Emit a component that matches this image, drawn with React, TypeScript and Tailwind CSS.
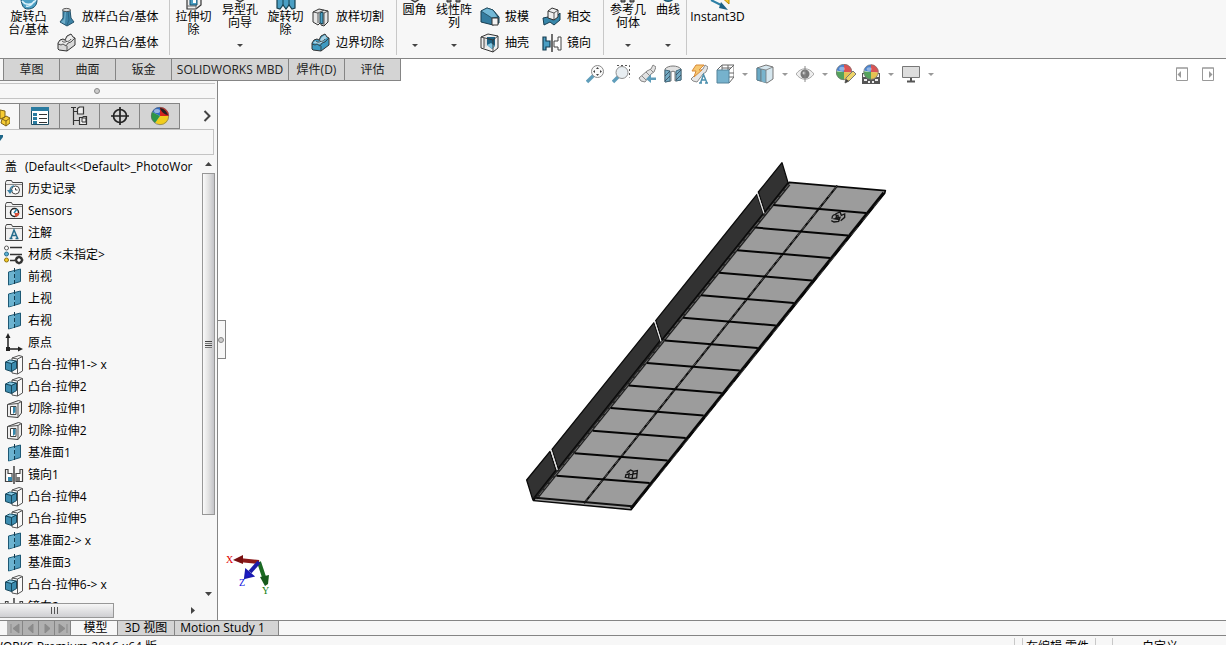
import { ReactNode } from "react";

const blue = "#4b9fc4"
const ink = "#333"

function Svg({ children, w = 20, h = 20, box }: { children: ReactNode; w?: number; h?: number; box?: string }) {
    return <svg className="shrink-0" width={w} height={h} viewBox={box || `0 0 ${w} ${h}`} fill="none" aria-hidden="true">{children}</svg>
}

/* ---------- ribbon icons ---------- */

const Revolve = () => (
    <Svg w={24} h={24}>
        <path d="M4 14c0-6 16-6 16 0s-4 9-9 9-6-4-7-9z" fill={blue} stroke="#17506d" />
        <path d="M5 15c3 4 9 5 14-1M9 20c4 1 6-1 8-5" stroke="#d8f0fa" strokeWidth="1.5" />
    </Svg>
)
const ExtrudeCut = () => (
    <Svg w={24} h={24}>
        <path d="M5 3h9l5-2v18l-5 4H5z" fill="#eee" stroke={ink} strokeWidth="1.2" />
        <path d="M14 3v20M5 20h9" stroke="#666" />
        <path d="M8 8h7v11H8z" fill={blue} stroke="#17506d" />
        <path d="M11 10h3v7h-3z" fill="#fff" />
    </Svg>
)
const HoleWizard = () => (
    <Svg w={24} h={24}>
        <path d="M7 15l10-3v8l-5 3-5-3z" fill="#bbb" stroke={ink} strokeWidth="1.2" />
    </Svg>
)
const RevolveCut = () => (
    <Svg w={24} h={24}>
        <path d="M3 10h6l3 3 3-3h6v12l-3 1-3-4-3 4-3-4-3 4-3-1z" fill={blue} stroke="#17404f" strokeWidth="1.2" />
        <path d="M9 12v8M15 12v8" stroke="#17404f" />
    </Svg>
)
const DarkTip = () => (
    <Svg w={24} h={24}>
        <path d="M5 18h4v5H5zM14 18h4v5h-4z" fill="#777" stroke={ink} />
    </Svg>
)
const BlueTip = () => (
    <Svg w={24} h={24}>
        <path d="M6 17c2 7 10 7 13 0" fill={blue} stroke="#17506d" strokeWidth="1.5" />
    </Svg>
)
const Instant = () => (
    <Svg w={24} h={24}>
        <path d="M13 9h10v9z" fill="#f8c930" stroke="#b88a00" />
        <path d="M5 14l12 6" stroke="#2c7fa5" strokeWidth="2" />
        <path d="M15 16l7 8-9-2z" fill="#1d6285" />
    </Svg>
)
const Loft = () => (
    <Svg>
        <path d="M6 3h7l1 8 3 4-7 4-7-4 3-4z" fill="#3d83a6" stroke="#24526a" />
        <path d="M8 4l-1 8-3 3 4 2 1-13z" fill="#6fadc9" />
        <path d="M11 4l1 9-2 5" stroke="#2b6685" />
        <ellipse cx="9.500" cy="3" rx="4" ry="1.600" fill="#ddd" stroke="#333" strokeWidth=".8" />
    </Svg>
)
const Boundary = ({ fill = "#d9d9d9" }: { fill?: string }) => (
    <Svg>
        <path d="M1 10l2-3 3-1 2 1 2-4 4-2 2 3 2 1v7l-8 6-8-1-1-1z" fill={fill} stroke={ink} />
        <path d="M2 10l2-2 3 1c2 0 2-3 4-5l3-2 2 3c-2 0-3 4-5 5l-3 1z" fill="#fff" opacity=".55" />
        <path d="M1 11l3 1 2-1 3 2 2-3 3-1 4-4M10 13v5M5 8c2 2 4 1 5 0M8 7c1 2 4 2 6-1" stroke={ink} strokeWidth=".8" />
    </Svg>
)
const LoftCut = () => (
    <Svg>
        <path d="M2 5l6-3 9 2v11l-4 4-3-1v-3l-3 3-5-3z" fill="#e6e6e6" stroke={ink} />
        <path d="M9 6l3-1v12l-3-1z" fill={blue} stroke="#17404f" />
        <path d="M2 5l5 1v10M17 4l-4 2v12M7 6l6-3" stroke={ink} strokeWidth=".8" />
    </Svg>
)
const Draft = () => (
    <Svg>
        <path d="M1 4l6-3 6 2 6 7v6l-6 2-12-3z" fill="#347c9f" stroke="#173d50" />
        <path d="M1 4l6-3 6 2 5 7-6 1z" fill="#72b8d6" stroke="#173d50" strokeWidth=".7" />
        <path d="M12 11h6v7h-6z" fill="#f3f3f3" stroke={ink} />
    </Svg>
)
const Shell = () => (
    <Svg>
        <path d="M1 4l7-3 10 2v12l-5 4-12-4z" fill="#eee" stroke={ink} />
        <path d="M4 6l3 1v7l-3-1z" fill="#ddd" />
        <path d="M7 4h8v9l-3 3-5-4z" fill="#1d6284" />
        <path d="M7 12l4-2 4 3-3 3z" fill="#7cc4e0" />
        <path d="M1 4l12 3v12M13 7l5-4M4 5v10" stroke={ink} strokeWidth=".9" />
    </Svg>
)
const Intersect = () => (
    <Svg>
        <path d="M1 11l5-1 5 3 7-7v7l-6 5-4-3-6 3z" fill="#3887aa" stroke="#173d50" />
        <path d="M6 4l4-3 6 2v7l-4 3-6-2z" fill="#eee" stroke={ink} />
        <path d="M6 4l6 2v7M12 6l4-3" stroke={ink} strokeWidth=".8" />
    </Svg>
)
const Mirror = () => (
    <Svg>
        <path d="M1 4h3v4h4v6H4v3H1z" fill={blue} stroke="#173d50" strokeWidth="1.200" />
        <path d="M19 4h-3v4h-4v6h4v3h3z" fill="#fff" stroke="#444" />
        <path d="M10 1v18" stroke="#111" strokeWidth="1.2" />
    </Svg>
)

/* ---------- view toolbar icons ---------- */

const ZoomFit = () => (
    <Svg w={18}>
        <path d="M1 18l7-7" stroke="#5f9dba" strokeWidth="3.4" />
        <circle cx="11.500" cy="7.500" r="6" fill="#fafafa" stroke="#8a8a8a" />
        <path d="M11.500 3l1.500 2h-3zM11.500 12l1.500-2h-3zM7 7.500l2-1.500v3zM16 7.500l-2-1.500v3z" fill="#444" />
    </Svg>
)
const ZoomArea = () => (
    <Svg w={18}>
        <path d="M5 1.500h12.500v12" stroke="#555" strokeDasharray="2 2" />
        <path d="M1 18l6-6" stroke="#5f9dba" strokeWidth="3.400" />
        <circle cx="10" cy="8.500" r="6" fill="#e8eef2" stroke="#909090" />
    </Svg>
)
const PrevView = () => (
    <Svg w={18}>
        <path d="M1 14l8-7 4-2 2-4 3 2-2 5-3 2-6 8-4-1z" fill="#e2e2e2" stroke="#858585" />
        <path d="M4 12l4 4M8 8l4 4M12 5l3 3" stroke="#888" />
        <path d="M18 13.500h-5v-3l-5 4.500 5 4v-3h5z" fill="#5f9dba" />
    </Svg>
)
const Section = () => (
    <Svg w={18}>
        <path d="M1 5c3-4 13-4 16 0v11l-6 1V8c-1-1-3-1-4 0v9l-6 1z" fill="#e1e1e1" stroke="#777" />
        <path d="M1 6l5 1v10l-5 1zM12 7l5-2v11l-5 1z" fill="#74abc4" stroke="#456c80" />
        <path d="M1 12l5-5M1 17l5-5M12 11l5-5M12 16l5-5" stroke="#345" strokeWidth=".8" />
    </Svg>
)
const Annotate = () => (
    <Svg w={18}>
        <path d="M1 15l7-7 5-3 2-4 3 2-2 5-3 2-6 8-4-1z" fill="#e6e6e6" stroke="#8a8a8a" />
        <path d="M6 1h8l-5 5h3l-8 7 2-6H2z" fill="#f7c872" stroke="#d88a39" />
        <path d="M9 19h3M15 19h3M10.500 19l3-8.500 3.500 8.500M12 16h3.500" stroke="#4c90ae" strokeWidth="1.500" />
    </Svg>
)
const Orient = () => (
    <Svg w={18}>
        <path d="M1 6l5-5h12v12l-5 6M6 1v5M18 1l-5 5M12 1v12h6M12 9h6M6 4h9" stroke="#666" />
        <path d="M1 6h12v13H1z" fill="#76b2cd" stroke="#54839a" />
    </Svg>
)
const Display = () => (
    <Svg w={18}>
        <path d="M1 4l9-3 7 2v12l-6 4-10-3z" fill="#d5e6ee" stroke="#777" />
        <path d="M1 4l4 1v12l-4-1z" fill="#69a9c5" stroke="#557f93" strokeWidth=".8" />
        <path d="M5 5l5 1v13l-5-2z" fill="#79b4cd" />
        <path d="M5 5l5 1 7-3M10 6v13M5 5v12" stroke="#777" strokeWidth=".8" />
    </Svg>
)
const Eye = () => (
    <Svg w={18}>
        <path d="M0 10c5-7 13-7 18 0-5 7-13 7-18 0z" fill="#eee" stroke="#aaa" />
        <circle cx="9" cy="10" r="4.500" fill="#777" />
        <circle cx="8" cy="9" r="1.500" fill="#ccc" />
        <path d="M9 2v16" stroke="#888" />
    </Svg>
)
const Ball = ({ x = 9, y = 9, r = 8 }: { x?: number; y?: number; r?: number }) => (
    <g transform={`translate(${x} ${y}) scale(${r})`}>
        <path d="M0 0L-.95-.2A1 1 0 0 1 .1-.98z" fill="#4a83cf" />
        <path d="M0 0L0-1A1 1 0 0 1 1 .1z" fill="#db5454" />
        <path d="M0 0L1 .05A1 1 0 0 1 0 1z" fill="#e5c251" />
        <path d="M0 0L0 1A1 1 0 0 1-1-.1z" fill="#55a35c" />
        <circle r=".97" stroke="#777" strokeWidth=".09" />
        <ellipse cx="-.25" cy="-.4" rx=".35" ry=".25" fill="#fff" opacity=".4" />
    </g>
)
const Appearance = () => (
    <Svg>
        <Ball x={8} y={8} r={8} />
        <path d="M9 19l1-5 7-7 3 3-7 7z" fill="#eed569" stroke="#777" />
        <path d="M9 19l1-4 3 2z" fill="#444" />
    </Svg>
)
const Scene = () => (
    <Svg w={18}>
        <path d="M0 9h18v11H0z" fill="#555" />
        <path d="M1 10h2v3H1zM15 10h2v3h-2zM2 15h3v2H2zM6 17h2v2H6zM10 17h2v2h-2zM13 15h3v2h-3z" fill="#eee" />
        <Ball x={9} y={8} r={7.500} />
    </Svg>
)
const Monitor = () => (
    <Svg w={18}>
        <path d="M.5 2.500h17v11H.5z" fill="#ddd" stroke="#777" />
        <path d="M9 14v3M5 17.500h8" stroke="#555" strokeWidth="2" />
    </Svg>
)

const Down = ({ color = "#444", w = 6 }: { color?: string; w?: number }) => (
    <Svg w={w} h={3} box="0 0 6 3"><path d="M0 0h6L3 3z" fill={color} /></Svg>
)

/* ---------- tree icons ---------- */

const Folder = ({ children }: { children: ReactNode }) => (
    <Svg>
        <path d="M1.500 17.500v-14l1-2h5l1 2h10v14z" fill="#f0f0f0" stroke="#444" />
        <path d="M2 5.500h16" stroke="#888" />
        {children}
    </Svg>
)
const HistoryIcon = () => (
    <Folder>
        <circle cx="11.500" cy="11" r="4" fill="#fff" stroke="#444" />
        <path d="M11.500 9v2h2" stroke="#444" />
        <path d="M3 11l3 4 3-4z" fill="#397fa1" />
        <path d="M6 12c0-3 2-5 4-5" stroke="#397fa1" strokeWidth="1.500" />
    </Folder>
)
const SensorIcon = () => (
    <Folder>
        <circle cx="10.500" cy="11.500" r="4" fill="#fff" stroke="#222" strokeWidth="1.500" />
        <path d="M10 12l3-4" stroke="#2b82a8" strokeWidth="1.500" />
        <path d="M10.500 12h5a5 5 0 0 1-4 4z" fill="#d6503a" />
    </Folder>
)
const NoteIcon = () => (
    <Folder>
        <path d="M5.500 15.500h3M11.500 15.500h3M7 15l3-8 3.500 8M8.500 12.500h3.500" stroke="#256c8c" strokeWidth="1.500" />
    </Folder>
)
const MaterialIcon = () => (
    <Svg>
        <path d="M6 2.500h12M6 9.500h12M6 15.500h5" stroke="#333" strokeWidth="1.500" />
        <circle cx="2.500" cy="3" r="2" fill="#fff" stroke="#555" />
        <circle cx="2.500" cy="9" r="2" fill="#5db1d5" stroke="#2b6d8b" />
        <circle cx="2.500" cy="15" r="2" fill="#f5c927" stroke="#8f7310" />
        <circle cx="15" cy="15" r="3" fill="#fff" stroke="#333" strokeWidth="2" />
        <path d="M15 10.500v9M10.500 15h9M12 12l6 6M18 12l-6 6" stroke="#333" />
        <circle cx="15" cy="15" r="1.500" fill="#fff" />
    </Svg>
)
const PlaneIcon = () => (
    <Svg>
        <path d="M4.500 5l12-3v12.500L4.500 18z" fill="#4f9cbe" stroke="#1d5874" />
        <path d="M5 5.500l6-1.500v12l-6 1.500z" fill="#6cb3d0" />
        <path d="M10.500 1v18" stroke="#143d50" strokeDasharray="4 2" />
    </Svg>
)
const OriginIcon = () => (
    <Svg>
        <path d="M4 4v12h13" stroke="#222" strokeWidth="1.500" />
        <path d="M4 0l2.500 5h-5zM19 16l-5-2.500v5zM2 14h4v4H2z" fill="#222" />
    </Svg>
)
const BossIcon = () => (
    <Svg>
        <path d="M8 3l7-2.500 3.500 1v14.500l-5 3L8 18z" fill="#f8f8f8" stroke="#555" />
        <path d="M13.500 4v15M8 3l5.500 1 5-2.500" stroke="#555" />
        <path d="M1.500 7l4-2 7 1v7.500l-5 3-6-2z" fill="#3c8caf" stroke="#17465b" />
        <path d="M2.500 7l3.500-1.500 5 .8L7.500 8z" fill="#8acbe5" />
        <path d="M1.500 7l6 1.500 5-2.500M7.500 8.500v8" stroke="#17465b" />
    </Svg>
)
const CutIcon = () => (
    <Svg>
        <path d="M3.500 5.500l11-4 3 1V14l-3.500 4.500-10.500-1z" fill="#eee" stroke="#444" />
        <path d="M3.500 5.500l10.500-1v14M14 4.500l3.500-2" stroke="#555" />
        <path d="M6.500 7.500h5.500v8H6.500z" fill="#fff" stroke="#444" />
        <path d="M9 8h2.500v5L9 15z" fill="#3387ac" />
    </Svg>
)
const MirrorFeature = () => (
    <Svg>
        <path d="M1.500 4.500H4v4h4v8H1.500zM18.500 4.500H16v4h-4v8h6.500z" fill="#fff" stroke="#444" strokeWidth="1.200" />
        <path d="M4 12h4v4H4z" fill="#3387ac" />
        <path d="M12 12h4v4h-4z" fill="#777" />
        <path d="M10 1v18" stroke="#111" strokeWidth="1.200" />
    </Svg>
)

/* ---------- ribbon ---------- */

function Big({ icon, lines, arrow, width }: { icon: ReactNode; lines: string[]; arrow?: boolean; width: string }) {
    return (
        <button className={`flex flex-col items-center ${width} ${arrow ? "-mt-[21px]" : "-mt-[14px]"}`}>
            {icon}
            <span className="min-h-[26px] whitespace-pre text-center leading-[13px]">{lines.join("\n")}</span>
            {arrow && <span className="mt-[15px]"><Down /></span>}
        </button>
    )
}

function Stack({ items, width }: { items: [ReactNode, string][]; width: string }) {
    return (
        <div className={`flex flex-col pt-1 ${width}`}>
            {items.map(([icon, label]) => (
                <button key={label} className="flex h-[26px] items-center gap-[5px] whitespace-nowrap">{icon}{label}</button>
            ))}
        </div>
    )
}

function Ribbon() {
    return (
        <header className="flex h-[59px] shrink-0 items-stretch overflow-hidden border-b border-[#858585] bg-[#f7f7f7]">
            <div className="mb-[3px] flex items-start border-r border-[#c8c8c8]">
                <Big width="w-[57px]" icon={<Revolve />} lines={["旋转凸", "台/基体"]} />
                <Stack width="w-28" items={[[<Loft />, "放样凸台/基体"], [<Boundary />, "边界凸台/基体"]]} />
            </div>
            <div className="mb-[3px] flex items-start border-r border-[#c8c8c8]">
                <Big width="w-[47px]" icon={<ExtrudeCut />} lines={["拉伸切", "除"]} />
                <Big width="w-[46px]" icon={<HoleWizard />} lines={["异型孔", "向导"]} arrow />
                <Big width="w-[45px]" icon={<RevolveCut />} lines={["旋转切", "除"]} />
                <Stack width="w-[88px] pl-[3px]" items={[[<LoftCut />, "放样切割"], [<Boundary fill="#3e9ac1" />, "边界切除"]]} />
            </div>
            <div className="mb-[3px] flex items-start border-r border-[#c8c8c8]">
                <Big width="w-[35px]" icon={<HoleWizard />} lines={["圆角"]} arrow />
                <Big width="w-[44px]" icon={<DarkTip />} lines={["线性阵", "列"]} arrow />
                <Stack width="w-[62px] pl-1" items={[[<Draft />, "拔模"], [<Shell />, "抽壳"]]} />
                <Stack width="w-[65px] pl-1" items={[[<Intersect />, "相交"], [<Mirror />, "镜向"]]} />
            </div>
            <div className="mb-[3px] flex items-start border-r border-[#c8c8c8] pr-[2px]">
                <Big width="w-12" icon={<DarkTip />} lines={["参考几", "何体"]} arrow />
                <Big width="w-8" icon={<BlueTip />} lines={["曲线"]} arrow />
            </div>
            <Big width="w-[61px]" icon={<Instant />} lines={["Instant3D"]} />
        </header>
    )
}

const tabs = [
    ["草图", "w-14"], ["曲面", "w-14"], ["钣金", "w-14"], ["SOLIDWORKS MBD", "w-[117px]"], ["焊件(D)", "w-14"], ["评估", "w-14"],
]

const viewTools: [string, ReactNode, boolean][] = [
    ["Zoom to fit", <ZoomFit />, false],
    ["Zoom to area", <ZoomArea />, false],
    ["Previous view", <PrevView />, false],
    ["Section view", <Section />, false],
    ["Annotation views", <Annotate />, false],
    ["View orientation", <Orient />, true],
    ["Display style", <Display />, true],
    ["Hide or show", <Eye />, true],
    ["Edit appearance", <Appearance />, false],
    ["Apply scene", <Scene />, true],
    ["View settings", <Monitor />, true],
]

function TabRow() {
    return (
        <div className="flex h-[22px] shrink-0 items-start">
            <nav className="flex h-[22px] border-b border-[#858585] bg-[#f7f7f7] pl-[3px]">
                <div className="flex border-l border-[#858585]">
                    {tabs.map(([name, w]) => (
                        <button key={name} className={`${w} whitespace-nowrap border-r border-[#858585] bg-[#d4d4d4] text-[#222]`}>{name}</button>
                    ))}
                </div>
            </nav>
            <div className="z-10 flex gap-2 pl-[185px] pt-[5px]">
                {viewTools.map(([name, icon, arrow]) => (
                    <button key={name} aria-label={name} className="flex items-center gap-2">
                        <span className="flex w-[18px]">{icon}</span>
                        {arrow && <Down color="#999" />}
                    </button>
                ))}
            </div>
            <div className="z-10 ml-auto flex gap-[14px] pr-3 pt-2">
                <button aria-label="Collapse left">
                    <Svg w={12} h={14}><path d="M.5 1h11v12.500H.5zM0 1h12" stroke="#999" /><path d="M5 4v7L1.500 7.500z" fill="#999" /></Svg>
                </button>
                <button aria-label="Collapse right">
                    <Svg w={12} h={14}><path d="M.5 1h11v12.500H.5zM0 1h12" stroke="#999" /><path d="M7 4v7l3.500-3.500z" fill="#999" /></Svg>
                </button>
            </div>
        </div>
    )
}

/* ---------- feature manager ---------- */

const tree: [ReactNode, string][] = [
    [<HistoryIcon />, "历史记录"],
    [<SensorIcon />, "Sensors"],
    [<NoteIcon />, "注解"],
    [<MaterialIcon />, "材质 <未指定>"],
    [<PlaneIcon />, "前视"],
    [<PlaneIcon />, "上视"],
    [<PlaneIcon />, "右视"],
    [<OriginIcon />, "原点"],
    [<BossIcon />, "凸台-拉伸1-> x"],
    [<BossIcon />, "凸台-拉伸2"],
    [<CutIcon />, "切除-拉伸1"],
    [<CutIcon />, "切除-拉伸2"],
    [<PlaneIcon />, "基准面1"],
    [<MirrorFeature />, "镜向1"],
    [<BossIcon />, "凸台-拉伸4"],
    [<BossIcon />, "凸台-拉伸5"],
    [<PlaneIcon />, "基准面2-> x"],
    [<PlaneIcon />, "基准面3"],
    [<BossIcon />, "凸台-拉伸6-> x"],
    [<MirrorFeature />, "镜向2"],
]

const panelTabs: [string, ReactNode][] = [
    ["Properties", <Svg>
        <path d="M1.500 1.500h17v17h-17z" fill="#fff" stroke="#1d4d63" /><path d="M1 1h18v4H1z" fill="#2a7ba0" />
        <path d="M3 7h4v3H3zM3 11h4v3H3zM3 15h4v3H3z" fill="#2a7ba0" /><path d="M9 8.500h8M9 12.500h8M9 16.500h8" stroke="#333" />
    </Svg>],
    ["Configurations", <Svg>
        <path d="M3.500 1v18M1 1.500h5M4 5.500h5M4 14.500h5" stroke="#333" strokeWidth="1.200" />
        <path d="M7.500 2.500l2-1.500h4v7h-6zM9.500 11.500h3l1-1h3v8h-7z" fill="#eee" stroke="#333" strokeWidth="1.200" />
        <path d="M12 12h4v4h-4z" stroke="#333" />
    </Svg>],
    ["Dimensions", <Svg>
        <circle cx="10" cy="10" r="6.500" stroke="#222" strokeWidth="1.700" /><path d="M10 1v18M1 10h18" stroke="#222" strokeWidth="1.700" />
    </Svg>],
    ["Display", <Svg>
        <path d="M10 10L2 6a9 9 0 0 1 9-5z" fill="#2e69c4" /><path d="M10 10V1c5 0 9 4 9 9z" fill="#d5261e" />
        <path d="M10 10h9c0 5-4 9-9 9L5 17z" fill="#f1cd1c" /><path d="M10 10l-5 7C1 14 0 10 2 6z" fill="#2c9547" />
        <path d="M10 2c4 0 7 4 8 7-3 0-7-3-8-7z" fill="#222" /><circle cx="10" cy="10" r="8.700" stroke="#666" strokeWidth=".6" />
        <ellipse cx="7" cy="5" rx="3" ry="2" fill="#fff" opacity=".5" />
    </Svg>],
]

function Panel() {
    return (
        <aside className="flex w-[218px] shrink-0 flex-col border-r border-[#858585] bg-[#f7f7f7]">
            <div className="mr-[2px] mt-[2px] flex h-4 shrink-0 items-center border-y border-[#c4c4c4] pl-[94px]">
                <span className="size-[6px] rounded-full border border-[#888] bg-[#ccc]" />
            </div>
            <div className="mt-1 flex h-[26px] shrink-0 items-stretch">
                <button aria-label="Feature tree" className="flex w-5 items-center border-r border-t border-[#858585]">
                    <Svg w={10} h={20}>
                        <path d="M0 3l5 1v6l-5 2zM2 12l4-3 4 2v5l-4 3-5-3z" fill="#f6cc32" stroke="#806416" />
                        <path d="M2 12l4 2 4-3M6 14v5" stroke="#806416" />
                    </Svg>
                </button>
                {panelTabs.map(([name, icon]) => (
                    <button key={name} aria-label={name} className="flex w-10 items-center justify-center border-y border-r border-[#858585] bg-[#d4d4d4]">{icon}</button>
                ))}
                <button aria-label="More" className="ml-auto pr-[6px]">
                    <Svg w={8} h={12}><path d="M1.500 1l5 5-5 5" stroke="#444" strokeWidth="2" /></Svg>
                </button>
            </div>
            <div className="mr-[3px] flex h-[26px] shrink-0 border border-l-0 border-[#c4c4c4]">
                <Svg w={4} h={14}><path d="M0 5h3v2l-3 4z" fill="#1f6789" /></Svg>
                <input aria-label="Filter" className="w-full min-w-0 bg-transparent outline-none" />
            </div>
            <div className="flex min-h-0 flex-1 pr-[2px]">
                <ul className="min-w-0 flex-1 overflow-hidden">
                    <li className="flex h-[23px] items-center gap-2 whitespace-nowrap pl-[5px] pt-px">
                        <span>盖</span><span>(Default&lt;&lt;Default&gt;_PhotoWor</span>
                    </li>
                    {tree.map(([icon, label]) => (
                        <li key={label} className="flex h-[22px] items-center gap-[4px] whitespace-nowrap pl-1">{icon}{label}</li>
                    ))}
                </ul>
                <div className="flex w-[13px] shrink-0 flex-col items-center">
                    <span className="flex h-[18px] items-center"><Svg w={7} h={4}><path d="M0 4h7L3.500 0z" fill="#444" /></Svg></span>
                    <div className="flex h-[342px] w-full flex-col items-center justify-center gap-px border border-[#979797] bg-linear-to-r from-[#fafafa] via-[#e2e2e2] to-[#c4c4c8]">
                        <span className="h-px w-[7px] bg-[#444]" />
                        <span className="h-px w-[7px] bg-[#777]" />
                        <span className="h-px w-[7px] bg-[#444]" />
                        <span className="h-px w-[7px] bg-[#777]" />
                    </div>
                    <span className="mt-auto flex h-[18px] items-center"><Svg w={7} h={4}><path d="M0 0h7L3.500 4z" fill="#444" /></Svg></span>
                </div>
            </div>
            <div className="mb-[2px] flex h-[15px] shrink-0 items-center pr-[22px]">
                <div className="flex h-[15px] w-[114px] items-center justify-center gap-[2px] border border-l-0 border-[#979797] bg-linear-to-b from-[#f6f6f6] to-[#cfcfd2] pr-1">
                    <span className="h-[7px] w-px bg-[#555]" />
                    <span className="h-[7px] w-px bg-[#555]" />
                    <span className="h-[7px] w-px bg-[#555]" />
                </div>
                <span className="ml-auto"><Svg w={4} h={7}><path d="M0 0v7l4-3.500z" fill="#444" /></Svg></span>
            </div>
        </aside>
    )
}

/* ---------- graphics area ---------- */

const flanges = [
    "816,38 834,98 764,186 745,126",
    "741,133 760,190 455,570 437,512",
    "432,518 450,572 144,955 126,898",
    "120,904 138,960 68,1048 50,990",
]
const ribs = Array.from({ length: 13 }, (_, i) => i)

function Model() {
    return (
        <Svg w={390} h={370} box="0 0 1170 1110">
            <polygon points="838,97 1126,122 1124,130 363,1079 70,1051" fill="#9c9c9c" stroke="#080808" strokeWidth="5" strokeLinejoin="round" />
            <path d="M836 102L78 1044" stroke="#222" strokeWidth="13" />
            <path d="M836 104L82 1042" stroke="#8a8a8a" strokeWidth="2" strokeDasharray="18 6" />
            <path d="M982 107L222 1060" stroke="#0a0a0a" strokeWidth="6" />
            <path d="M980 109L224 1057" stroke="#999" strokeWidth="1.500" strokeDasharray="16 9" />
            <path d="M1121 128L363 1075" stroke="#080808" strokeWidth="8" />
            <path d="M1110 148L374 1068" stroke="#777" strokeWidth="1.500" strokeDasharray="30 24" />
            <path d="M76 1043L366 1069" stroke="#111" strokeWidth="6" />
            <path d="M76 1049L360 1075" stroke="#aaa" strokeWidth="2" />
            {ribs.map((i) => (
                <path key={i} d={`M${790 - 54.2 * i} ${165 + 67.7 * i}L${1068 - 54.1 * i} ${189 + 67.5 * i}`} stroke="#050505" strokeWidth="6" />
            ))}
            {flanges.map((p) => <polygon key={p} points={p} fill="#323232" stroke="#0a0a0a" strokeWidth="4" strokeLinejoin="round" />)}
            <path d="M743 132l19 58M434 514l19 60M123 900l19 60" stroke="#ddd" strokeWidth="4" />
            <g stroke="#151515" strokeWidth="4">
                <path d="M966 206c0-12 8-14 14-10l-2 8 12-2-4 12-14 2-8-4M976 192l14-6 4 10 10-4 0 10-12 10M984 194v16M970 206l14 2" />
                <path d="M350 968l12-8 8 4 12-2-2 22-14 2-20-4 2-8 10-2M358 968l-2 14M370 964l-4 22M380 970l-20 4" />
            </g>
        </Svg>
    )
}

const Triad = () => (
    <Svg w={80} h={60}>
        <path d="M44 22L24 20" stroke="#8c1a1a" strokeWidth="4" />
        <path d="M18 20l10-5v9z" fill="#7a1010" />
        <path d="M44 22l5 15" stroke="#1b6a22" strokeWidth="4" />
        <path d="M45 37l9-2-1 9-3 2z" fill="#165a1c" />
        <path d="M44 22L35 32" stroke="#1c1ca8" strokeWidth="4" />
        <path d="M30 38l1-8 7 6z" fill="#1a1ad0" stroke="#1a1ab0" strokeWidth="2" />
        <g fontFamily="Liberation Serif, serif" fontSize="10">
            <text x="11" y="23" fill="#e00000">X</text>
            <text x="24" y="46" fill="#1010e0">Z</text>
            <text x="47" y="54" fill="#108010">Y</text>
        </g>
    </Svg>
)

function Viewport() {
    return (
        <main className="relative min-w-0 flex-1 overflow-hidden bg-white pl-[292px] pt-[69px]">
            <Model />
            <button aria-label="Hide panel" className="absolute left-0 top-[239px] flex h-[39px] w-2 items-center border border-l-0 border-[#858585] bg-[#f7f7f7]">
                <span className="size-[6px] rounded-full border border-[#888] bg-[#ccc]" />
            </button>
            <div className="absolute bottom-5 left-[-3px]"><Triad /></div>
        </main>
    )
}

const navShapes = ["M4 3v9M12 3v9L6 7.500z", "M10 3v9L5 7.500z", "M6 3v9l5-4.500z", "M12 3v9M4 3v9l6-4.500z"]

function BottomTabs() {
    return (
        <div className="flex h-4 shrink-0 border-y border-[#858585] bg-[#f7f7f7] pl-[7px]">
            {navShapes.map((d, i) => (
                <button key={d} aria-label={`Sheet ${i + 1}`} className="w-4 border-r border-[#858585] bg-[#b0b0b0]">
                    <Svg w={15} h={14}><path d={d} fill="#8b8b8b" stroke="#8b8b8b" /></Svg>
                </button>
            ))}
            <button className="w-[46px] pl-[3px] leading-[14px]">模型</button>
            <button className="w-[58px] border-x border-[#858585] bg-[#d4d4d4] leading-[14px]">3D 视图</button>
            <button className="w-[104px] border-r border-[#858585] bg-[#d4d4d4] pr-2 leading-[14px]">Motion Study 1</button>
        </div>
    )
}

function StatusBar() {
    return (
        <footer className="flex h-[9px] shrink-0 items-start overflow-hidden whitespace-nowrap bg-[#f7f7f7] leading-[18px]">
            <div className="flex w-[157px] justify-end overflow-hidden pt-[2px]">SOLIDWORKS Premium 2016 x64 版</div>
            <div className="ml-auto mt-[2px] flex">
                <span className="w-2 border-l border-[#c8c8c8]" />
                <span className="w-[74px] border-x border-[#c8c8c8] pl-[3px]">在编辑 零件</span>
                <span className="w-4" />
                <span className="w-[114px] border-l border-[#c8c8c8] pl-[29px]">自定义</span>
            </div>
        </footer>
    )
}

export default function App() {
    return (
        <div className="flex h-screen flex-col overflow-hidden bg-white font-['Open_Sans','Noto_Sans_CJK_SC',sans-serif] text-xs text-black">
            <Ribbon />
            <TabRow />
            <div className="flex min-h-0 flex-1">
                <Panel />
                <Viewport />
            </div>
            <BottomTabs />
            <StatusBar />
        </div>
    );
}
